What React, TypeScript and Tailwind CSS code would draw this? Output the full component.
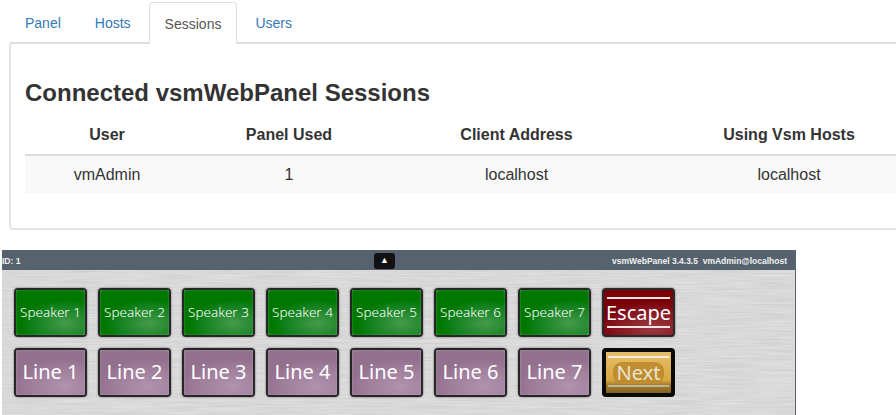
import React from 'react';

const tabs = ['Panel', 'Hosts', 'Sessions', 'Users'];
const speakers = [1, 2, 3, 4, 5, 6, 7];

function PanelButton({ label, tone }: { label: string; tone: 'green' | 'purple' }) {
  const toneClass =
    tone === 'green'
      ? 'bg-[radial-gradient(ellipse_44px_24px_at_72%_74%,#459a4c,#10801c_75%,#007800)] text-[13.5px] font-light'
      : 'bg-[radial-gradient(ellipse_50px_28px_at_70%_82%,#b193ae,#9c7b99_75%,#94708f)] pb-[2px] text-[20px]';
  return (
    <button className="flex h-[49px] w-[73px] items-center justify-center rounded-[4px] border-2 border-[#262626] p-0 shadow-[0_0_2px_#555]">
      <span
        className={`flex h-full w-full items-center justify-center whitespace-nowrap rounded-[2px] font-['Noto_Sans',sans-serif] text-white shadow-[inset_0_0_2px_rgba(255,255,255,0.3)] ${toneClass}`}
      >
        {label}
      </span>
    </button>
  );
}

export default function App() {
  return (
    <div className="h-[415px] w-[896px] overflow-hidden bg-white font-['Liberation_Sans',Arial,sans-serif] text-[#333]">
      <div className="w-[1000px] pl-[10px] pt-[2px]">
        <nav className="flex h-[42px] border-b-2 border-[#ddd]">
          <div className="-ml-px flex gap-[2px]">
            {tabs.map((t) => (
              <a
                key={t}
                className={
                  t === 'Sessions'
                    ? 'flex h-[42px] items-center rounded-t-[4px] border border-b-0 border-[#ddd] bg-white px-[15px] pt-[1px] text-[14px] text-[#555]'
                    : 'flex h-[42px] items-center border border-transparent px-[15px] pt-[1px] text-[14px] text-[#337ab7]'
                }
              >
                {t}
              </a>
            ))}
          </div>
        </nav>

        <section className="-ml-px h-[186px] rounded-b-[4px] border-x-2 border-b-2 border-[#e3e3e3] px-[14px]">
          <h2 className="pt-[33px] text-[24px] font-bold leading-[32px]">Connected vsmWebPanel Sessions</h2>
          <table className="mt-[9px] w-[909px] table-fixed border-collapse text-center text-[16px]">
            <colgroup>
              <col className="w-[164px]" />
              <col className="w-[200px]" />
              <col className="w-[255px]" />
              <col className="w-[290px]" />
            </colgroup>
            <thead>
              <tr className="h-[37px] border-b-2 border-[#ddd] font-bold">
                <th className="pb-[2px]">User</th>
                <th className="pb-[2px]">Panel Used</th>
                <th className="pb-[2px]">Client Address</th>
                <th className="pb-[2px]">Using Vsm Hosts</th>
              </tr>
            </thead>
            <tbody>
              <tr className="h-[38px] bg-[#f9f9f9]">
                <td>vmAdmin</td>
                <td>1</td>
                <td>localhost</td>
                <td>localhost</td>
              </tr>
            </tbody>
          </table>
        </section>
      </div>

      <div className="relative ml-[2px] mt-[20px] h-[165px] w-[794px] overflow-hidden border-r border-[#56636f]">
        {/* brushed metal */}
        <svg className="absolute inset-0 h-full w-full" aria-hidden="true">
          <filter id="brushed">
            <feTurbulence type="fractalNoise" baseFrequency="0.02 0.7" numOctaves="3" seed="4" />
            <feColorMatrix values="0 0 0 0 0.5  0 0 0 0 0.5  0 0 0 0 0.5  1.4 0 0 0 -0.42" />
          </filter>
          <rect width="100%" height="100%" fill="#dedede" />
          <rect width="100%" height="100%" filter="url(#brushed)" opacity="0.55" />
        </svg>

        <div className="relative flex h-[20px] items-center justify-between bg-[#56636f] pt-[3px] text-[8.5px] font-bold text-[#f0f0f0]">
          <span>ID: 1</span>
          <span className="absolute left-[372px] top-[3px] flex h-[16px] w-[21px] items-center justify-center rounded-[3px] bg-[#111] text-[9px] text-white">
            ▲
          </span>
          <span className="pr-[8px]">vsmWebPanel 3.4.3.5&nbsp;&nbsp;vmAdmin@localhost</span>
        </div>

        <div className="relative flex flex-col gap-[11px] pl-[12px] pt-[18px]">
          <div className="flex gap-[11px]">
            {speakers.map((n) => (
              <PanelButton key={n} label={`Speaker ${n}`} tone="green" />
            ))}
            <button className="relative flex h-[49px] w-[73px] items-center justify-center rounded-[4px] border-2 border-[#2a2a2a] bg-[radial-gradient(ellipse_55px_28px_at_70%_85%,#9a3a40,#82101a_75%,#780006)] p-0 font-['Noto_Sans',sans-serif] text-[20px] text-white shadow-[0_0_2px_#555]">
              <span className="absolute inset-x-[3px] top-[7px] h-[2px] bg-[#f0e4e4]" />
              Escape
              <span className="absolute inset-x-[3px] bottom-[7px] h-[2px] bg-[#f0e4e4]" />
            </button>
          </div>
          <div className="flex gap-[11px]">
            {speakers.map((n) => (
              <PanelButton key={n} label={`Line ${n}`} tone="purple" />
            ))}
            <button className="relative flex h-[49px] w-[73px] items-center justify-center rounded-[4px] border-[4px] border-[#0a0a0a] bg-[linear-gradient(#e6bd6a,#d8a840_68%,#a87e2a_80%,#7e621f)] p-0 font-['Noto_Sans',sans-serif] text-[20px] text-[#e8e4d4]">
              <span className="absolute inset-x-[2px] top-[4px] h-[2px] bg-[#f5efdc]" />
              <span className="rounded-[9px] bg-[#c08e30] px-[4px] leading-[22px]">Next</span>
              <span className="absolute inset-x-[2px] bottom-[6px] h-[2px] bg-[#b8b2a0]" />
            </button>
          </div>
        </div>
      </div>
    </div>
  );
}
